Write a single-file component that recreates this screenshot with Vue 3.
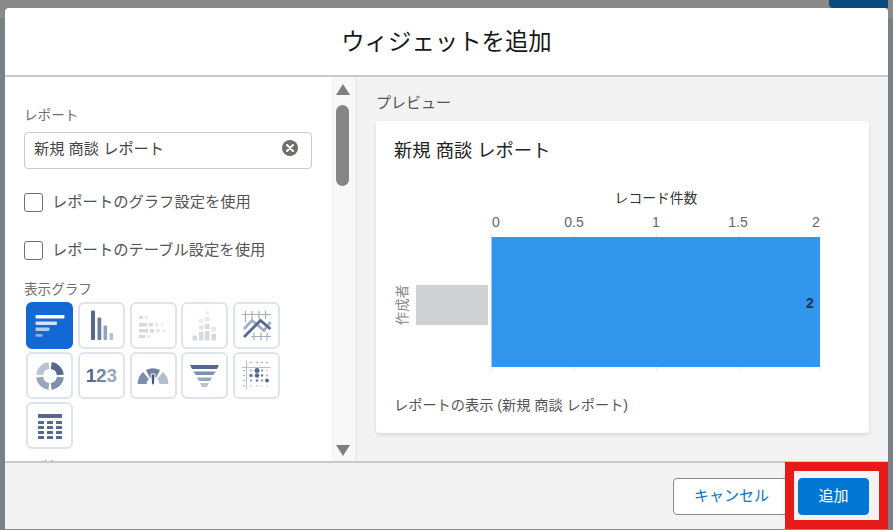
<script setup>
const jpFont = '"Liberation Sans", "Noto Sans CJK JP", sans-serif';

// グラフ種類のボタン
const chartTypes = ["hbar", "vbar", "hstack", "vstack", "line", "donut", "metric", "gauge", "funnel", "scatter", "table"];

const ticks = [
  { label: "0", x: 102, mark: 97.5 },
  { label: "0.5", x: 180, mark: 180 },
  { label: "1", x: 262, mark: 262.5 },
  { label: "1.5", x: 344, mark: 345 },
  { label: "2", x: 422, mark: 426 },
];
</script>

<template>
  <div class="page">
    <div class="side-strip left"></div>
    <div class="side-strip right"></div>
    <div class="top-tab"></div>

    <div class="modal">
      <header class="modal-header">
        <h1>ウィジェットを追加</h1>
      </header>

      <div class="modal-body">
        <section class="settings">
          <div class="settings-scroll">
            <label class="field-label">レポート</label>
            <div class="report-input">
              <span>新規 商談 レポート</span>
              <svg class="clear-icon" viewBox="0 0 16 16">
                <circle cx="8" cy="8" r="8" fill="#706e6b" />
                <path d="M5 5l6 6M11 5l-6 6" stroke="#fff" stroke-width="2" stroke-linecap="round" />
              </svg>
            </div>

            <div class="check-row first">
              <span class="checkbox"></span>
              <span>レポートのグラフ設定を使用</span>
            </div>
            <div class="check-row second">
              <span class="checkbox"></span>
              <span>レポートのテーブル設定を使用</span>
            </div>

            <label class="field-label chart-label">表示グラフ</label>
            <div class="chart-grid">
              <button
                v-for="type in chartTypes"
                :key="type"
                class="chart-btn"
                :class="{ active: type === 'hbar' }"
              >
                <svg v-if="type === 'hbar'" viewBox="0 0 46 46" width="46" height="46">
                  <rect x="8.5" y="12" width="29" height="3.6" rx="1" fill="#fff" />
                  <rect x="8.5" y="18.5" width="21.5" height="3.4" rx="1" fill="#cfe2f8" />
                  <rect x="8.5" y="24.5" width="14" height="3.4" rx="1" fill="#b0cef2" />
                  <rect x="8.5" y="31" width="7" height="2.8" rx="1" fill="#86b4ea" />
                </svg>
                <svg v-else-if="type === 'vbar'" viewBox="0 0 46 46" width="46" height="46">
                  <rect x="13" y="7.5" width="4" height="29.5" rx="1" fill="#54698d" />
                  <rect x="19.5" y="14.5" width="3.8" height="22.5" rx="1" fill="#6b7fa1" />
                  <rect x="25.5" y="22.5" width="3.6" height="14.5" rx="1" fill="#95a3ba" />
                  <rect x="31.5" y="30" width="3.6" height="7" rx="1" fill="#b4bfd0" />
                </svg>
                <svg v-else-if="type === 'hstack'" viewBox="0 0 46 46" width="46" height="46" fill="#d4d9e2">
                  <rect x="9" y="13" width="4" height="3" /><rect x="15" y="13" width="3" height="3" fill="#e6e9ee" />
                  <rect x="9" y="20" width="8" height="3.5" /><rect x="19" y="20" width="4" height="3.5" />
                  <rect x="25" y="20" width="3" height="3.5" fill="#e6e9ee" /><rect x="31" y="20" width="2" height="3.5" fill="#eef0f3" />
                  <rect x="9" y="26" width="9" height="3.5" /><rect x="20" y="26" width="4" height="3.5" />
                  <rect x="26" y="26" width="4" height="3.5" fill="#e6e9ee" /><rect x="32" y="26" width="4" height="3.5" fill="#eef0f3" />
                  <rect x="9" y="32" width="6" height="3" /><rect x="17" y="32" width="3" height="3" fill="#e6e9ee" />
                </svg>
                <svg v-else-if="type === 'vstack'" viewBox="0 0 46 46" width="46" height="46" fill="#d4d9e2">
                  <rect x="10.5" y="32.5" width="4.5" height="5" />
                  <rect x="17" y="29" width="4.5" height="8.5" /><rect x="17" y="22.5" width="4.5" height="4" fill="#e0e4ea" />
                  <rect x="17" y="16" width="4.5" height="4" fill="#eef0f3" />
                  <rect x="23" y="28" width="4.5" height="9.5" /><rect x="23" y="21" width="4.5" height="5" />
                  <rect x="23" y="14" width="4.5" height="4.5" fill="#e6e9ee" /><rect x="23" y="8" width="4.5" height="3.5" fill="#f0f2f5" />
                  <rect x="29.5" y="31" width="4.5" height="6.5" /><rect x="29.5" y="24" width="4.5" height="4.5" fill="#e6e9ee" />
                </svg>
                <svg v-else-if="type === 'line'" viewBox="0 0 46 46" width="46" height="46" fill="none">
                  <path d="M8 11.5h29M11.5 8v8M18 8v8M25 8v8M31.5 8v8M17 33.5h20M20 29.5v8M27 29.5v8M33 29.5v8M11.5 16v3.5" stroke="#a4afc2" stroke-width="1.2" />
                  <path d="M10 26l8-8.5 12 10 6.5-8.5" stroke="#a4afc2" stroke-width="2.8" />
                  <path d="M10 34l16.5-16.5 10 8.5" stroke="#54698d" stroke-width="2.8" />
                </svg>
                <svg v-else-if="type === 'donut'" viewBox="0 0 46 46" width="46" height="46" fill="none" stroke-width="7">
                  <path d="M24.2 12.6A10.5 10.5 0 0 1 33.4 21.8" stroke="#54698d" />
                  <path d="M33.4 24.2A10.5 10.5 0 0 1 24.2 33.4" stroke="#7e8fab" />
                  <path d="M21.8 33.4A10.5 10.5 0 0 1 12.6 24.2" stroke="#98a6bd" />
                  <path d="M12.6 21.8A10.5 10.5 0 0 1 21.8 12.6" stroke="#b9c3d3" />
                </svg>
                <span v-else-if="type === 'metric'" class="metric">1<i>2</i><b>3</b></span>
                <svg v-else-if="type === 'gauge'" viewBox="0 0 46 46" width="46" height="46" fill="none" stroke-width="9">
                  <path d="M12 31A11 11 0 0 1 16 22.5" stroke="#7e8fab" />
                  <path d="M18 21A11 11 0 0 1 28 21" stroke="#6f82a2" />
                  <path d="M30 22.5A11 11 0 0 1 34 31" stroke="#b4bfd0" />
                  <path d="M21 21h4l-.4 9-1.6 3-1.6-3z" fill="#3f5680" stroke="#fff" stroke-width="1" />
                </svg>
                <svg v-else-if="type === 'funnel'" viewBox="0 0 46 46" width="46" height="46">
                  <path d="M8 12h29l-2 4H10z" fill="#54698d" />
                  <path d="M11 18.5h23l-3 3.5H14z" fill="#7e8fab" />
                  <path d="M15 24.5h15l-2 3.5H17z" fill="#98a6bd" />
                  <path d="M18 30h9l-2 4h-5z" fill="#b9c3d3" />
                </svg>
                <svg v-else-if="type === 'scatter'" viewBox="0 0 46 46" width="46" height="46" fill="#6b7fa1">
                  <path d="M12.5 7.5v29M8 14.5h28.5" stroke="#b4bfd0" stroke-width="1" fill="none" />
                  <circle cx="17" cy="9.5" r=".7" /><circle cx="23" cy="9.5" r=".7" /><circle cx="28" cy="9.5" r=".7" /><circle cx="33" cy="9.5" r=".7" />
                  <circle cx="10" cy="17.5" r=".7" /><circle cx="10" cy="22.5" r=".7" /><circle cx="10" cy="27.5" r=".7" /><circle cx="10" cy="33" r=".7" />
                  <circle cx="17" cy="17.5" r="1" fill="#98a6bd" /><circle cx="23" cy="17.5" r="2.5" fill="#54698d" /><circle cx="28" cy="17.5" r="1.2" fill="#98a6bd" /><circle cx="33" cy="17.5" r=".8" fill="#b9c3d3" />
                  <circle cx="17" cy="22.5" r="1.8" /><circle cx="23" cy="22.5" r="2.2" fill="#54698d" /><circle cx="28" cy="22.5" r="1.3" /><circle cx="33" cy="22.5" r="1" fill="#98a6bd" />
                  <circle cx="17" cy="27.5" r="1" /><circle cx="23" cy="27.5" r="1.3" /><circle cx="28" cy="27.5" r="1.3" fill="#98a6bd" /><circle cx="33" cy="27.5" r="1.9" fill="#54698d" />
                  <circle cx="17" cy="33" r=".7" fill="#98a6bd" /><circle cx="23" cy="33" r=".7" fill="#98a6bd" /><circle cx="28" cy="33" r=".7" fill="#b9c3d3" /><circle cx="33" cy="33" r=".7" fill="#b9c3d3" />
                </svg>
                <svg v-else viewBox="0 0 46 46" width="46" height="46" fill="#54698d">
                  <rect x="11" y="11" width="24" height="4" />
                  <g v-for="y in [18, 23, 28, 33]" :key="y">
                    <rect x="11" :y="y" width="6" height="3" rx=".5" />
                    <rect x="20" :y="y" width="6" height="3" rx=".5" />
                    <rect x="29" :y="y" width="6" height="3" rx=".5" />
                  </g>
                </svg>
              </button>
            </div>

            <label class="field-label clipped"><span class="req">*</span>軸</label>
          </div>

          <div class="scrollbar">
            <span class="arrow up"></span>
            <span class="thumb"></span>
            <span class="arrow down"></span>
          </div>
        </section>

        <section class="preview">
          <div class="preview-label">プレビュー</div>
          <div class="card">
            <h2>新規 商談 レポート</h2>
            <svg class="chart" viewBox="0 0 460 210" width="460" height="210">
              <text x="262" y="31" text-anchor="middle" class="axis-title" :font-family="jpFont">レコード件数</text>
              <text
                v-for="tick in ticks"
                :key="tick.label"
                :x="tick.x"
                y="55"
                text-anchor="middle"
                class="tick"
                :font-family="jpFont"
              >{{ tick.label }}</text>
              <g v-for="tick in ticks" :key="'m' + tick.label" stroke="#e8e8e8" stroke-width="1">
                <line :x1="tick.mark" :x2="tick.mark" y1="61" y2="65" />
                <line :x1="tick.mark" :x2="tick.mark" y1="195" y2="199" />
              </g>
              <rect x="97.5" y="65" width="328.5" height="130" fill="#3296ed" />
              <rect x="22" y="113" width="72" height="40" fill="#d0d1d2" />
              <text transform="translate(12.5 133) rotate(-90)" text-anchor="middle" class="cat" :font-family="jpFont">作成者</text>
              <text x="416" y="135.5" text-anchor="middle" class="value" :font-family="jpFont">2</text>
            </svg>
            <div class="report-link">レポートの表示 (新規 商談 レポート)</div>
          </div>
        </section>
      </div>

      <footer class="modal-footer">
        <button class="btn cancel">キャンセル</button>
        <button class="btn add">追加</button>
      </footer>
    </div>

    <div class="highlight"></div>
  </div>
</template>

<style>
html,
body {
  margin: 0;
  overflow: hidden;
}
</style>

<style scoped>
.page {
  position: relative;
  width: 893px;
  height: 530px;
  overflow: hidden;
  background: #8a8a8a;
  font-family: "Liberation Sans", "Noto Sans CJK JP", sans-serif;
  color: #3e3e3c;
  padding: 8px 5px 0;
  box-sizing: border-box;
}

.side-strip {
  position: absolute;
  top: 18px;
  bottom: 0;
  width: 5px;
  background: #7b8085;
}

.side-strip.left {
  left: 0;
}

.side-strip.right {
  right: 0;
}

.top-tab {
  position: absolute;
  top: 0;
  right: 5px;
  width: 59px;
  height: 8px;
  background: #0b4a7f;
  border-radius: 0 0 0 4px;
}

.modal {
  position: relative;
  width: 883px;
  height: 521px;
  display: flex;
  flex-direction: column;
  background: #fff;
  border-radius: 4px 4px 0 0;
}

.modal-header {
  height: 69px;
  flex: none;
  box-sizing: border-box;
  display: flex;
  align-items: center;
  justify-content: center;
  border-bottom: 2px solid #c9c9c9;
}

.modal-header h1 {
  margin: 0;
  font-size: 23.4px;
  font-weight: 400;
  color: #181818;
  padding-bottom: 3px;
}

.modal-body {
  flex: 1;
  min-height: 0;
  display: flex;
}

.settings {
  width: 352px;
  flex: none;
  display: flex;
  border-right: 2px solid #ececec;
  box-sizing: border-box;
  overflow: hidden;
}

.settings-scroll {
  flex: 1;
  min-width: 0;
  padding: 31px 0 0 19px;
  overflow: hidden;
}

.field-label {
  display: block;
  font-size: 13.6px;
  line-height: 16px;
  color: #706e6b;
}

.report-input {
  width: 288px;
  height: 37px;
  margin-top: 8px;
  box-sizing: border-box;
  border: 1px solid #c9c9c9;
  border-radius: 4px;
  display: flex;
  align-items: center;
  justify-content: space-between;
  padding: 0 13px 5px 9px;
  font-size: 15.2px;
  color: #444;
}

.report-input span {
  position: relative;
  top: -1px;
}

.clear-icon {
  width: 16px;
  height: 16px;
}

.check-row {
  display: flex;
  align-items: center;
  gap: 9px;
  font-size: 15.3px;
  color: #555;
  line-height: 20px;
}

.check-row.first {
  margin-top: 23px;
}

.check-row.second {
  margin-top: 28px;
}

.checkbox {
  width: 17px;
  height: 17px;
  flex: none;
  border: 1px solid #706e6b;
  border-radius: 3px;
  background: #fff;
}

.chart-label {
  margin-top: 22px;
}

.chart-grid {
  margin: 4px 0 0 2px;
  display: grid;
  grid-template-columns: repeat(5, 47px);
  grid-auto-rows: 47px;
  column-gap: 4.8px;
  row-gap: 3.2px;
}

.chart-btn {
  padding: 0;
  display: flex;
  align-items: center;
  justify-content: center;
  background: #fff;
  border: 2px solid #dfe3ec;
  border-radius: 6px;
  box-sizing: border-box;
}

.chart-btn svg {
  flex: none;
}

.chart-btn.active {
  background: #1269d3;
  border-color: #1269d3;
}

.metric {
  font-size: 19px;
  font-weight: 700;
  letter-spacing: -0.2px;
  color: #54698d;
}

.metric i {
  font-style: normal;
  color: #7486a5;
}

.metric b {
  color: #98a6bd;
}

.clipped {
  margin: 11px 0 0 12px;
  white-space: nowrap;
}

.req {
  color: #ea001e;
  margin-right: 1px;
}

.scrollbar {
  width: 24px;
  flex: none;
  background: #f8f8f8;
  display: flex;
  flex-direction: column;
  align-items: center;
  padding: 7px 1px 0 0;
  box-sizing: border-box;
}

.arrow {
  width: 0;
  height: 0;
  border-left: 7.5px solid transparent;
  border-right: 7.5px solid transparent;
}

.arrow.up {
  border-bottom: 11px solid #7f7f7f;
}

.arrow.down {
  border-top: 11px solid #7f7f7f;
  margin-top: 259px;
}

.thumb {
  width: 13px;
  height: 81px;
  margin-top: 10px;
  border-radius: 7px;
  background: #858585;
}

.preview {
  flex: 1;
  min-width: 0;
  background: #f3f3f3;
  padding: 17px 19px 0 19px;
}

.preview-label {
  font-size: 15px;
  line-height: 18px;
  color: #555;
}

.card {
  margin-top: 9px;
  height: 312px;
  background: #fff;
  border-radius: 4px;
  box-shadow: 0 2px 4px rgba(0, 0, 0, 0.12);
  padding: 18px 18px 0;
  box-sizing: border-box;
}

.card h2 {
  margin: 0;
  font-size: 18.3px;
  line-height: 24px;
  font-weight: 400;
  color: #222;
}

.chart {
  display: block;
  margin: 9px 0 0 0;
  overflow: visible;
}

.axis-title {
  font-size: 13.8px;
  font-weight: 400;
  fill: #333;
}

.tick {
  font-size: 14px;
  fill: #666;
}

.cat {
  font-size: 13.5px;
  fill: #888;
}

.value {
  font-size: 14px;
  font-weight: 700;
  fill: #16325c;
}

.report-link {
  margin-top: 14px;
  font-size: 14.2px;
  line-height: 18px;
  color: #555;
}

.modal-footer {
  height: 68px;
  flex: none;
  box-sizing: border-box;
  background: #f3f3f3;
  border-top: 2px solid #c9c9c9;
  display: flex;
  align-items: flex-start;
  justify-content: flex-end;
  gap: 8px;
  padding: 15px 19px 0 0;
}

.btn {
  height: 37px;
  padding: 0 0 5px;
  border-radius: 4px;
  font-family: inherit;
  font-size: 15px;
  box-sizing: border-box;
}

.cancel {
  width: 117px;
  background: #fff;
  border: 1px solid #8a8a8a;
  color: #0176d3;
}

.add {
  width: 71px;
  background: #0176d3;
  border: 1px solid #0176d3;
  color: #fff;
}

.highlight {
  position: absolute;
  left: 785px;
  top: 462px;
  width: 103px;
  height: 67px;
  box-sizing: border-box;
  border: 9px solid #e71a1a;
}
</style>
